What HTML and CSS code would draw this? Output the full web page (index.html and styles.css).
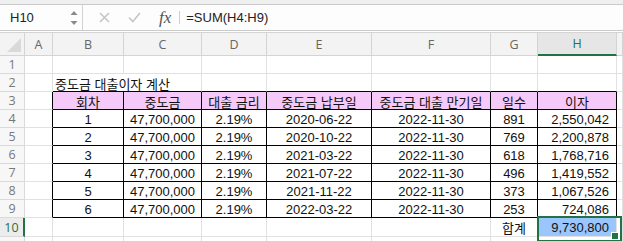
FILE: index.html
```html
<!DOCTYPE html>
<html lang="ko">
<head>
  <meta charset="UTF-8" />
  <title>중도금 대출이자 계산</title>
  <link rel="stylesheet" href="styles.css">
</head>
<body>
  <!-- Toolbar edge -->
  <div class="window-top"></div>

  <!-- Formula bar -->
  <div class="formula-bar">
    <div class="name-box">
      <span class="name">H10</span>
      <svg class="spinner" width="8" height="16" viewBox="0 0 8 16">
        <path d="M0.5 5 L4 1 L7.5 5 Z" fill="#8a8a8a"/>
        <path d="M0.5 11 L4 15 L7.5 11 Z" fill="#8a8a8a"/>
      </svg>
    </div>
    <svg class="tool cancel" width="11" height="11" viewBox="0 0 11 11">
      <path d="M1 1 L10 10 M10 1 L1 10" stroke="#c6c6c6" stroke-width="1.6" fill="none"/>
    </svg>
    <svg class="tool confirm" width="13" height="11" viewBox="0 0 13 11">
      <path d="M1 5.5 L4.8 9.5 L12 1" stroke="#c6c6c6" stroke-width="1.6" fill="none"/>
    </svg>
    <span class="fx">fx</span>
    <span class="divider"></span>
    <span class="formula">=SUM(H4:H9)</span>
  </div>

  <!-- Sheet -->
  <div class="sheet">
    <div class="corner"></div>
    <div class="col-head">A</div>
    <div class="col-head">B</div>
    <div class="col-head">C</div>
    <div class="col-head">D</div>
    <div class="col-head">E</div>
    <div class="col-head">F</div>
    <div class="col-head">G</div>
    <div class="col-head active">H</div>
    <div class="col-head"></div>

    <!-- row 1 -->
    <div class="row-head">1</div>
    <div class="cell"></div><div class="cell"></div><div class="cell"></div><div class="cell"></div>
    <div class="cell"></div><div class="cell"></div><div class="cell"></div><div class="cell"></div><div class="cell"></div>

    <!-- row 2 -->
    <div class="row-head">2</div>
    <div class="cell"></div>
    <div class="cell spill edge-b">중도금 대출이자 계산</div>
    <div class="cell edge-b"></div>
    <div class="cell edge-b"></div>
    <div class="cell edge-b"></div>
    <div class="cell edge-b"></div>
    <div class="cell edge-b"></div>
    <div class="cell edge-b"></div>
    <div class="cell"></div>

    <!-- row 3 -->
    <div class="row-head">3</div>
    <div class="cell edge-r"></div>
    <div class="cell t th">회차</div>
    <div class="cell t th">중도금</div>
    <div class="cell t th">대출 금리</div>
    <div class="cell t th">중도금 납부일</div>
    <div class="cell t th">중도금 대출 만기일</div>
    <div class="cell t th">일수</div>
    <div class="cell t th">이자</div>
    <div class="cell"></div>

    <!-- row 4 -->
    <div class="row-head">4</div>
    <div class="cell edge-r"></div>
    <div class="cell t">1</div>
    <div class="cell t">47,700,000</div>
    <div class="cell t">2.19%</div>
    <div class="cell t">2020-06-22</div>
    <div class="cell t">2022-11-30</div>
    <div class="cell t">891</div>
    <div class="cell t num">2,550,042</div>
    <div class="cell"></div>

    <!-- row 5 -->
    <div class="row-head">5</div>
    <div class="cell edge-r"></div>
    <div class="cell t">2</div>
    <div class="cell t">47,700,000</div>
    <div class="cell t">2.19%</div>
    <div class="cell t">2020-10-22</div>
    <div class="cell t">2022-11-30</div>
    <div class="cell t">769</div>
    <div class="cell t num">2,200,878</div>
    <div class="cell"></div>

    <!-- row 6 -->
    <div class="row-head">6</div>
    <div class="cell edge-r"></div>
    <div class="cell t">3</div>
    <div class="cell t">47,700,000</div>
    <div class="cell t">2.19%</div>
    <div class="cell t">2021-03-22</div>
    <div class="cell t">2022-11-30</div>
    <div class="cell t">618</div>
    <div class="cell t num">1,768,716</div>
    <div class="cell"></div>

    <!-- row 7 -->
    <div class="row-head">7</div>
    <div class="cell edge-r"></div>
    <div class="cell t">4</div>
    <div class="cell t">47,700,000</div>
    <div class="cell t">2.19%</div>
    <div class="cell t">2021-07-22</div>
    <div class="cell t">2022-11-30</div>
    <div class="cell t">496</div>
    <div class="cell t num">1,419,552</div>
    <div class="cell"></div>

    <!-- row 8 -->
    <div class="row-head">8</div>
    <div class="cell edge-r"></div>
    <div class="cell t">5</div>
    <div class="cell t">47,700,000</div>
    <div class="cell t">2.19%</div>
    <div class="cell t">2021-11-22</div>
    <div class="cell t">2022-11-30</div>
    <div class="cell t">373</div>
    <div class="cell t num">1,067,526</div>
    <div class="cell"></div>

    <!-- row 9 -->
    <div class="row-head">9</div>
    <div class="cell edge-r"></div>
    <div class="cell t">6</div>
    <div class="cell t">47,700,000</div>
    <div class="cell t">2.19%</div>
    <div class="cell t">2022-03-22</div>
    <div class="cell t">2022-11-30</div>
    <div class="cell t">253</div>
    <div class="cell t num">724,086</div>
    <div class="cell"></div>

    <!-- row 10 -->
    <div class="row-head active">10</div>
    <div class="cell"></div><div class="cell"></div><div class="cell"></div>
    <div class="cell"></div><div class="cell"></div><div class="cell"></div>
    <div class="cell center">합계</div>
    <div class="cell num selected">9,730,800</div>
    <div class="cell"></div>

    <!-- row 11 -->
    <div class="row-head">11</div>
    <div class="cell"></div><div class="cell"></div><div class="cell"></div><div class="cell"></div>
    <div class="cell"></div><div class="cell"></div><div class="cell"></div><div class="cell"></div><div class="cell"></div>
  </div>
</body>
</html>
```

FILE: styles.css
```css
* {
  box-sizing: border-box;
}

body {
  margin: 0;
  width: 623px;
  height: 241px;
  overflow: hidden;
  background: #fff;
  color: #111;
  font-family: "Liberation Sans", "Noto Sans CJK KR", sans-serif;
  font-size: 13px;
}

/* Top strip */
.window-top {
  height: 4px;
  background: #efefef;
}

/* Formula bar */
.formula-bar {
  display: flex;
  align-items: center;
  height: 27px;
  margin-bottom: 1px;
  background: #fdfdfd;
  border-top: 1px solid #cacaca;
  border-bottom: 1px solid #cacaca;
}

.name-box {
  display: flex;
  align-items: center;
  width: 83px;
  height: 100%;
  padding-left: 10px;
  padding-right: 4px;
  border-right: 1px solid #d2d2d2;
}

.name {
  color: #222;
}

.spinner {
  margin-left: auto;
}

.cancel {
  margin-left: 16px;
}

.confirm {
  margin-left: 18px;
}

.fx {
  margin-left: 18px;
  font-family: "Liberation Serif", serif;
  font-style: italic;
  font-size: 17px;
  color: #555;
}

.divider {
  width: 1px;
  height: 13px;
  margin-left: 8px;
  background: #cfcfcf;
}

.formula {
  margin-left: 6px;
  color: #222;
}

/* Grid */
.sheet {
  display: grid;
  grid-template-columns: 25px 28px 71px 78px 65px 105px 119px 47px 79px 1fr;
  grid-template-rows: 23px repeat(9, 18px) 19px 18px;
  border-top: 1px solid #d4d4d4;
}

.corner,
.col-head,
.row-head,
.cell {
  display: flex;
  align-items: center;
  border-right: 1px solid #e1e1e1;
  border-bottom: 1px solid #e1e1e1;
  white-space: nowrap;
}

.corner {
  position: relative;
  background: #f3f3f3;
  border-color: #d4d4d4;
}

.corner::after {
  content: "";
  position: absolute;
  right: 3px;
  bottom: 3px;
  border-left: 14px solid transparent;
  border-bottom: 14px solid #d9d9d9;
}

.col-head {
  justify-content: center;
  background: #f3f3f3;
  border-color: #d4d4d4;
  color: #666;
  font-family: "Open Sans", sans-serif;
  font-size: 12.5px;
}

.col-head.active {
  background: #e6e6e6;
  color: #217346;
  border-bottom: 2px solid #217346;
}

.row-head {
  justify-content: center;
  background: #f7f7f7;
  border-color: #dadada;
  color: #777;
  font-family: "Open Sans", sans-serif;
  font-size: 12.5px;
}

.row-head.active {
  background: #ececec;
  color: #217346;
  border-right: 2px solid #217346;
}

.cell {
  padding-top: 1px;
}

/* Title text spills over neighbouring cells */
.spill {
  border-right: 0;
  padding-left: 2px;
}

/* Table borders */
.edge-b {
  border-bottom-color: #000;
}

.edge-r {
  border-right-color: #000;
}

.t {
  justify-content: center;
  border-right-color: #000;
  border-bottom-color: #000;
}

.th {
  background: #f5c9f8;
}

.center {
  justify-content: center;
}

.num {
  justify-content: flex-end;
  padding-right: 7px;
}

/* Active cell */
.selected {
  position: relative;
  background: #9ac5fd;
}

.selected::before {
  content: "";
  position: absolute;
  left: -1px;
  top: -2px;
  width: 81px;
  height: 22px;
  border: 2px solid #217346;
}

.selected::after {
  content: "";
  position: absolute;
  right: -3px;
  bottom: -4px;
  width: 6px;
  height: 6px;
  background: #217346;
  border: 1px solid #fff;
}
```
